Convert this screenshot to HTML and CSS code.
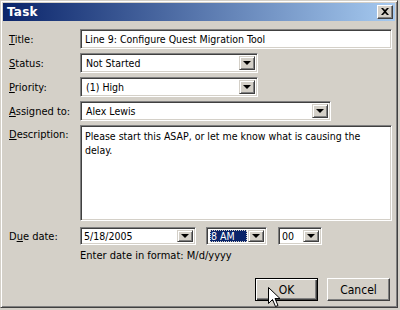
FILE: index.html
```html
<!DOCTYPE html>
<html>
<head>
<meta charset="utf-8">
<link rel="stylesheet" href="styles.css">
</head>
<body>
<div class="window">
  <div class="titlebar">
    <span class="title">Task</span>
    <span class="close"><svg width="8" height="7" viewBox="0 0 8 7"><path d="M0 0h2l2 2 2-2h2L5 3.5 8 7H6L4 5 2 7H0l3-3.5z" fill="#000"/></svg></span>
  </div>
  <div class="content">
    <div class="form">
      <label class="lbl"><u>T</u>itle:</label>
      <div class="field text">Line 9: Configure Quest Migration Tool</div>

      <label class="lbl"><u>S</u>tatus:</label>
      <div class="combo w178"><span class="val">Not Started</span><span class="drop"><i></i></span></div>

      <label class="lbl"><u>P</u>riority:</label>
      <div class="combo w178"><span class="val">(1) High</span><span class="drop"><i></i></span></div>

      <label class="lbl"><u>A</u>ssigned to:</label>
      <div class="combo w251"><span class="val">Alex Lewis</span><span class="drop"><i></i></span></div>

      <label class="lbl top"><u>D</u>escription:</label>
      <div class="field area">Please start this ASAP, or let me know what is causing the delay.</div>

      <label class="lbl due">D<u>u</u>e date:</label>
      <div class="dueRow">
        <div class="combo small w115"><span class="val">5/18/2005</span><span class="drop"><i></i></span></div>
        <div class="combo small w60"><span class="val sel"><b>8 AM</b></span><span class="drop"><i></i></span></div>
        <div class="combo small w43"><span class="val">00</span><span class="drop"><i></i></span></div>
      </div>

      <span></span>
      <div class="hint">Enter date in format: M/d/yyyy</div>
    </div>
    <div class="buttons">
      <div class="btn default"><span>OK</span></div>
      <div class="btn"><span>Cancel</span></div>
    </div>
  </div>
  <svg class="cursor" width="13" height="21" viewBox="0 0 13 21"><path d="M0.5 0.5 L0.5 16.5 L4.5 12.5 L7.5 19.5 L10 18.5 L7 11.5 L12 11.5 Z" fill="#fff" stroke="#000" stroke-width="1"/></svg>
</div>
</body>
</html>
```

FILE: styles.css
```css
html, body {
  margin: 0;
  padding: 0;
  background: #d4d0c8;
}
body {
  width: 400px;
  height: 310px;
  overflow: hidden;
  font-family: "DejaVu Sans Condensed", "DejaVu Sans", sans-serif;
  font-size: 10.5px;
  color: #000;
}
.window {
  position: relative;
  box-sizing: border-box;
  width: 398px;
  height: 308px;
  background: #d4d0c8;
  border-top: 1px solid #d4d0c8;
  border-left: 1px solid #d4d0c8;
  border-right: 1px solid #404040;
  border-bottom: 1px solid #404040;
  box-shadow: inset 1px 1px 0 #fff, inset -1px -1px 0 #808080;
  padding: 2px;
  margin: 0 1px 2px 0;
}
.titlebar {
  height: 18px;
  display: flex;
  align-items: center;
  justify-content: space-between;
  background: linear-gradient(to right, #0a246a, #a6caf0);
  padding: 0 2px 0 4px;
}
.title {
  color: #fff;
  font-family: "DejaVu Sans", sans-serif;
  font-weight: bold;
  font-size: 12px;
  letter-spacing: 0.2px;
}
.close {
  box-sizing: border-box;
  width: 16px;
  height: 14px;
  background: #d4d0c8;
  border-top: 1px solid #fff;
  border-left: 1px solid #fff;
  border-right: 1px solid #404040;
  border-bottom: 1px solid #404040;
  box-shadow: inset -1px -1px 0 #808080;
  display: flex;
  align-items: center;
  justify-content: center;
  padding-bottom: 1px;
}
.content {
  padding: 8px 4px 0 6px;
}
.form {
  display: grid;
  grid-template-columns: 71px 1fr;
  row-gap: 4px;
  align-items: center;
}
.lbl {
  white-space: nowrap;
  font-size: 11px;
}
.lbl.top {
  align-self: start;
  padding-top: 3px;
}
.lbl.due {
  margin-top: 2px;
}
.field, .combo {
  box-sizing: border-box;
  background: #fff;
  border-top: 1px solid #808080;
  border-left: 1px solid #808080;
  border-right: 1px solid #fff;
  border-bottom: 1px solid #fff;
  box-shadow: inset 1px 1px 0 #404040, inset -1px -1px 0 #d4d0c8;
}
.text {
  height: 20px;
  width: 312px;
  padding: 3px 4px;
  line-height: 13px;
  white-space: nowrap;
}
.area {
  height: 96px;
  width: 312px;
  padding: 3px 4px;
  line-height: 14px;
}
.combo {
  height: 20px;
  display: flex;
  align-items: stretch;
  padding: 2px;
}
.combo .val {
  flex: 1;
  display: flex;
  align-items: center;
  padding-left: 3px;
  white-space: nowrap;
}
.drop {
  box-sizing: border-box;
  width: 16px;
  background: #d4d0c8;
  border-top: 1px solid #d4d0c8;
  border-left: 1px solid #d4d0c8;
  border-right: 1px solid #404040;
  border-bottom: 1px solid #404040;
  box-shadow: inset 1px 1px 0 #fff, inset -1px -1px 0 #808080;
  display: flex;
  align-items: center;
  justify-content: center;
}
.drop i {
  width: 0;
  height: 0;
  border-left: 4px solid transparent;
  border-right: 4px solid transparent;
  border-top: 4px solid #000;
}
.w178 { width: 178px; }
.w251 { width: 251px; }
.w115 { width: 116px; }
.w60 { width: 61px; }
.w43 { width: 44px; }
.dueRow {
  display: flex;
  margin-top: 2px;
}
.dueRow .w60 { margin-left: 10px; }
.dueRow .w43 { margin-left: 11px; }
.combo.small {
  height: 18px;
}
.combo.small .val { padding-left: 1px; }
.val.sel {
  padding: 0;
  margin-right: 1px;
}
.val.sel b {
  font-weight: normal;
  flex: 1;
  align-self: stretch;
  display: flex;
  align-items: center;
  padding-left: 1px;
  background: #0a246a;
  color: #fff;
  outline: 1px dotted #d4d0c8;
  outline-offset: -1px;
}
.hint {
  font-size: 11px;
  margin-top: 0;
}
.buttons {
  display: flex;
  justify-content: flex-end;
  gap: 9px;
  margin-top: 16px;
  padding-right: 1px;
}
.btn {
  box-sizing: border-box;
  width: 63px;
  height: 23px;
  background: #d4d0c8;
  border-top: 1px solid #fff;
  border-left: 1px solid #fff;
  border-right: 1px solid #404040;
  border-bottom: 1px solid #404040;
  box-shadow: inset -1px -1px 0 #808080;
  display: flex;
  align-items: center;
  justify-content: center;
  font-size: 12px;
}
.btn.default {
  border: 1px solid #000;
  box-shadow: inset 1px 1px 0 #fff, inset -1px -1px 0 #404040, inset -2px -2px 0 #808080;
}
.cursor {
  position: absolute;
  left: 267px;
  top: 286px;
}
```
